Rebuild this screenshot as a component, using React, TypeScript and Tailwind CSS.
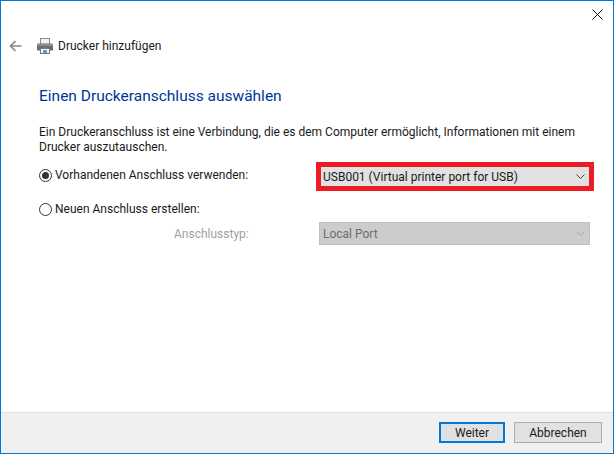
const Chevron = ({ color }: { color: string }) => (
	<svg width="9" height="5" viewBox="0 0 9 5" fill="none" stroke={color} strokeWidth="1">
		<path d="M0.5 0.5 L4.5 4.5 L8.5 0.5" />
	</svg>
)

const Radio = ({ checked }: { checked?: boolean }) => (
	<span className="w-[13px] h-[13px] rounded-full border border-[#333333] bg-white flex items-center justify-center shrink-0">
		{checked && <span className="w-[7px] h-[7px] rounded-full bg-[#333333]" />}
	</span>
)

const PrinterIcon = () => (
	<svg width="16" height="16" viewBox="0 0 16 16">
		<rect x="3.5" y="0.5" width="9" height="6" fill="#f4f4f4" stroke="#8a8a8a" />
		<path d="M0 7 Q0 5.5 1.5 5.5 H14.5 Q16 5.5 16 7 V12.5 H0 Z" fill="#6f6f6f" />
		<rect x="0" y="6" width="16" height="2" fill="#8d8d8d" />
		<rect x="3.5" y="10.5" width="9" height="5" fill="#f8f8f8" stroke="#777777" strokeWidth="1" />
		<rect x="6" y="12" width="4" height="3" fill="#4aa3df" />
	</svg>
)

const App = () => {
	return (
		<div className="w-[614px] h-[454px] border border-[#0078d7] bg-white flex flex-col text-[12px] text-[#1a1a1a] font-['Roboto',sans-serif]">
			<div className="flex justify-end pt-[8px] pr-[10px] h-[28px]">
				<svg width="11" height="11" viewBox="0 0 11 11" stroke="#111111" strokeWidth="1">
					<path d="M0.5 0.5 L10.5 10.5 M10.5 0.5 L0.5 10.5" />
				</svg>
			</div>

			<div className="flex items-center h-[16px] mt-[9px] pl-[8px]">
				<svg width="13" height="12" viewBox="0 0 13 12" fill="none" stroke="#858585" strokeWidth="1.6">
					<path d="M12.5 6 H1.5 M6.5 1 L1.5 6 L6.5 11" />
				</svg>
				<span className="ml-[15px] mr-[5px]"><PrinterIcon /></span>
				<span>Drucker hinzufügen</span>
			</div>

			<div className="flex-1 pl-[38px] pr-[16px]">
				<h1 className="mt-[32px] text-[15.5px] leading-[20px] text-[#003399]">Einen Druckeranschluss auswählen</h1>

				<p className="mt-[19px] leading-[15px] whitespace-nowrap">
					Ein Druckeranschluss ist eine Verbindung, die es dem Computer ermöglicht, Informationen mit einem
					<br />
					Drucker auszutauschen.
				</p>

				<div className="flex items-center mt-[7px] h-[29px]">
					<label className="flex items-center gap-[3px] w-[277px] pb-[3px]">
						<Radio checked />
						Vorhandenen Anschluss verwenden:
					</label>
					<div className="w-[278px] h-[29px] border-[5px] border-[#ed1c24] bg-[#e1e1e1] flex items-center justify-between pl-[2px] pr-[4px]">
						<span>USB001 (Virtual printer port for USB)</span>
						<Chevron color="#444444" />
					</div>
				</div>

				<label className="flex items-center gap-[3px] mt-[10px] h-[16px]">
					<Radio />
					Neuen Anschluss erstellen:
				</label>

				<div className="flex items-center mt-[5px] h-[23px] ml-[135px]">
					<span className="w-[145px] text-[#a0a0a0]">Anschlusstyp:</span>
					<div className="w-[271px] h-[23px] border border-[#bfbfbf] bg-[#cccccc] flex items-center justify-between pl-[3px] pr-[4px] text-[#6d6d6d]">
						<span>Local Port</span>
						<Chevron color="#a6a6a6" />
					</div>
				</div>
			</div>

			<div className="h-[41px] bg-[#f0f0f0] border-t border-[#dfdfdf] flex justify-end items-start pt-[9px] pr-[11px] gap-[9px]">
				<button className="w-[66px] h-[21px] border-2 border-[#0078d7] bg-[#e1e1e1] flex items-center justify-center">Weiter</button>
				<button className="w-[88px] h-[21px] border border-[#adadad] bg-[#e1e1e1] flex items-center justify-center">Abbrechen</button>
			</div>
		</div>
	)
}

export default App
